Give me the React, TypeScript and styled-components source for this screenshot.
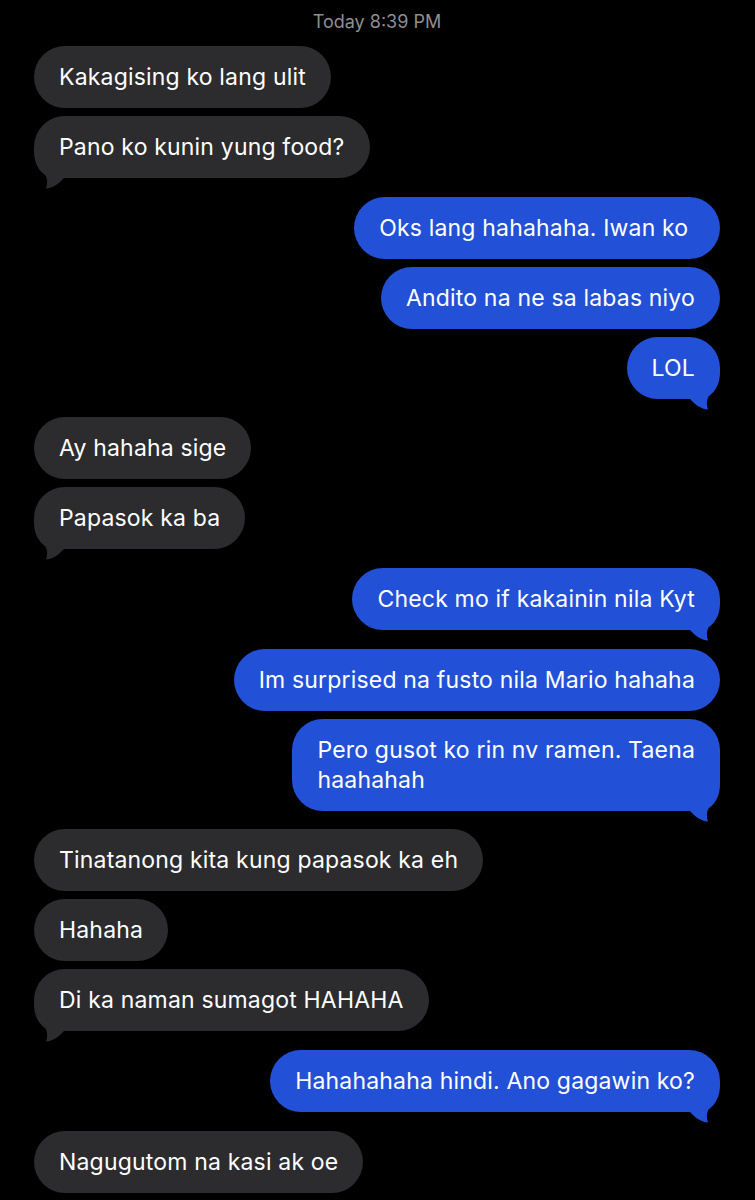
import React from "react";
import styled, { createGlobalStyle } from "styled-components";

const Global = createGlobalStyle`
  html, body {
    margin: 0;
    padding: 0;
    background: #000;
  }
  body {
    font-family: Inter, "Noto Sans", "Liberation Sans", sans-serif;
    -webkit-font-smoothing: antialiased;
  }
`;

const Screen = styled.div`
  width: 755px;
  min-height: 1200px;
  background: #000;
  box-sizing: border-box;
  padding: 12px 35px 0 34px;
  display: flex;
  flex-direction: column;
  overflow: hidden;
`;

const Stamp = styled.div`
  text-align: center;
  color: #8e8e93;
  font-size: 18px;
  line-height: 20px;
  margin-bottom: 14px;
`;

const Row = styled.div<{ $out: boolean; $tail: boolean }>`
  display: flex;
  justify-content: ${(p) => (p.$out ? "flex-end" : "flex-start")};
  margin-bottom: ${(p) => (p.$tail ? "18.7px" : "8px")};
`;

const Bubble = styled.div<{ $out: boolean }>`
  position: relative;
  max-width: 520px;
  box-sizing: border-box;
  padding: 16px 25px;
  border-radius: 31px;
  background: ${(p) => (p.$out ? "#2251d7" : "#2c2c2e")};
  color: #fff;
  font-size: 23px;
  line-height: 30px;
  letter-spacing: 0.18px;
  white-space: pre-wrap;
`;

const Text = styled.span`
  position: relative;
  z-index: 1;
`;

const TailSvg = styled.svg<{ $out: boolean }>`
  position: absolute;
  z-index: 0;
  bottom: -11px;
  width: 30px;
  height: 42px;
  ${(p) => (p.$out ? "right: 0;" : "left: 0; transform: scaleX(-1);")}
  pointer-events: none;
`;

const Tail = ({ out, color }: { out: boolean; color: string }) => (
  <TailSvg $out={out} viewBox="0 0 30 42">
    <path
      d="M0 0 H30 V4 C30 15 26 23 18.5 28.5 C16.5 32 16.3 37 18 41.5 C12 41 6 37.5 1.5 32.4 L0 31 Z"
      fill={color}
    />
  </TailSvg>
);

type Msg = { text: string; out: boolean; tail?: boolean };

const messages: Msg[] = [
  { text: "Kakagising ko lang ulit", out: false },
  { text: "Pano ko kunin yung food?", out: false, tail: true },
  { text: "Oks lang hahahaha. Iwan ko\u00A0", out: true },
  { text: "Andito na ne sa labas niyo", out: true },
  { text: "LOL", out: true, tail: true },
  { text: "Ay hahaha sige", out: false },
  { text: "Papasok ka ba", out: false, tail: true },
  { text: "Check mo if kakainin nila Kyt", out: true, tail: true },
  { text: "Im surprised na fusto nila Mario hahaha", out: true },
  { text: "Pero gusot ko rin nv ramen. Taena\nhaahahah", out: true, tail: true },
  { text: "Tinatanong kita kung papasok ka eh", out: false },
  { text: "Hahaha", out: false },
  { text: "Di ka naman sumagot HAHAHA", out: false, tail: true },
  { text: "Hahahahaha hindi. Ano gagawin ko?", out: true, tail: true },
  { text: "Nagugutom na kasi ak oe", out: false },
];

export default function App() {
  return (
    <>
      <Global />
      <Screen>
        <Stamp>Today 8:39 PM</Stamp>
        {messages.map((m, i) => (
          <Row key={i} $out={m.out} $tail={!!m.tail}>
            <Bubble $out={m.out}>
              {m.tail && <Tail out={m.out} color={m.out ? "#2251d7" : "#2c2c2e"} />}
              <Text>{m.text}</Text>
            </Bubble>
          </Row>
        ))}
      </Screen>
    </>
  );
}
